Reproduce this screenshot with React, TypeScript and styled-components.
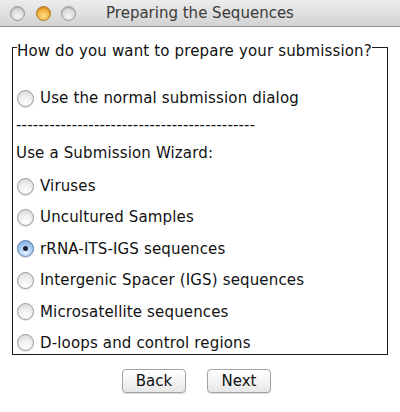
import React from "react";
import styled, { createGlobalStyle } from "styled-components";

const Global = createGlobalStyle`
  html, body { margin: 0; padding: 0; background: #ffffff; }
  body { font-family: "DejaVu Sans", "Liberation Sans", sans-serif; color: #111; }
`;

const Window = styled.div`
  width: 400px;
  height: 412px;
  display: flex;
  flex-direction: column;
  background: #ffffff;
  overflow: hidden;
`;

const TitleBar = styled.div`
  height: 26px;
  border-bottom: 1px solid #8e8e8e;
  background: linear-gradient(#ececec, #d3d3d3);
  display: grid;
  grid-template-columns: 1fr auto 1fr;
  align-items: center;
`;

const Lights = styled.div`
  display: flex;
  gap: 10.5px;
  padding-left: 10px;
`;

const Light = styled.div<{ $active?: boolean }>`
  width: 13px;
  height: 13px;
  border-radius: 50%;
  border: 0.5px solid ${(p) => (p.$active ? "#b0741c" : "#9a9a9a")};
  background: ${(p) =>
    p.$active
      ? "radial-gradient(circle at 50% 70%, #ffe08a 0%, #f3b23e 55%, #d98e1e 100%)"
      : "radial-gradient(circle at 50% 70%, #f4f4f4 0%, #dcdcdc 55%, #b8b8b8 100%)"};
  box-shadow: inset 0 1px 1px rgba(0,0,0,0.15);
`;

const Title = styled.div`
  font-size: 15px;
  color: #3b3b3b;
  white-space: nowrap;
`;

const Content = styled.div`
  padding: 20px 12px 0 12px;
  display: flex;
  flex-direction: column;
`;

const Panel = styled.div`
  border: 1px solid #1a1a1a;
  border-top: none;
  display: flex;
  flex-direction: column;
  padding-bottom: 1px;
`;

const Header = styled.div`
  height: 20px;
  display: flex;
  align-items: flex-start;
`;

const Tick = styled.div<{ $grow?: boolean }>`
  border-top: 1px solid #1a1a1a;
  width: 4px;
  flex: ${(p) => (p.$grow ? "1" : "none")};
`;

const Legend = styled.div`
  font-size: 15px;
  letter-spacing: 0.15px;
  line-height: 16px;
  margin-top: -4px;
  white-space: nowrap;
`;

const Row = styled.div<{ $top: number }>`
  height: 20px;
  margin-top: ${(p) => p.$top}px;
  display: flex;
  align-items: center;
  gap: 6px;
  padding-left: 4px;
  font-size: 15px;
  letter-spacing: 0.15px;
  white-space: nowrap;
`;

const Label = styled.div<{ $top: number }>`
  height: 20px;
  margin-top: ${(p) => p.$top}px;
  display: flex;
  align-items: center;
  padding-left: 3px;
  font-size: 15px;
  letter-spacing: 0.15px;
  white-space: nowrap;
`;

const Radio = styled.div<{ $checked?: boolean }>`
  width: 15px;
  height: 15px;
  border-radius: 50%;
  flex: none;
  display: flex;
  align-items: center;
  justify-content: center;
  border: 1px solid ${(p) => (p.$checked ? "#5b7fae" : "#9a9a9a")};
  background: ${(p) =>
    p.$checked
      ? "radial-gradient(circle at 50% 75%, #e6f2ff 0%, #a9cdf3 50%, #6f9fd4 100%)"
      : "radial-gradient(circle at 50% 80%, #ffffff 0%, #f0f0f0 45%, #d2d2d2 100%)"};
  box-shadow: 0 1px 1px rgba(0,0,0,0.12);
`;

const Dot = styled.div`
  width: 5px;
  height: 5px;
  border-radius: 50%;
  background: #17253a;
`;

const Wizard = styled.div`
  display: flex;
  flex-direction: column;
  gap: 11.4px;
  margin-top: 13px;
`;

const Buttons = styled.div`
  display: flex;
  justify-content: center;
  gap: 21px;
  margin-top: 14px;
  padding-right: 7px;
`;

const Button = styled.button`
  width: 64px;
  height: 24px;
  border-radius: 4px;
  border: 1px solid #a3a3a3;
  background: linear-gradient(#ffffff, #f1f1f1 60%, #e6e6e6);
  box-shadow: 0 1px 1px rgba(0,0,0,0.15);
  font-family: "DejaVu Sans", sans-serif;
  font-size: 15px;
  color: #111;
  padding: 0;
`;

const options = [
  "Viruses",
  "Uncultured Samples",
  "rRNA-ITS-IGS sequences",
  "Intergenic Spacer (IGS) sequences",
  "Microsatellite sequences",
  "D-loops and control regions",
];

export default function App() {
  return (
    <Window>
      <Global />
      <TitleBar>
        <Lights>
          <Light />
          <Light $active />
          <Light />
        </Lights>
        <Title>Preparing the Sequences</Title>
        <div />
      </TitleBar>
      <Content>
        <Panel>
          <Header>
            <Tick />
            <Legend>How do you want to prepare your submission?</Legend>
            <Tick $grow />
          </Header>
          <Row $top={21}>
            <Radio />
            Use the normal submission dialog
          </Row>
          <Label $top={7}>{"-".repeat(43)}</Label>
          <Label $top={8}>Use a Submission Wizard:</Label>
          <Wizard>
            {options.map((o) => (
              <Row $top={0} key={o}>
                <Radio $checked={o === "rRNA-ITS-IGS sequences"}>
                  {o === "rRNA-ITS-IGS sequences" && <Dot />}
                </Radio>
                {o}
              </Row>
            ))}
          </Wizard>
        </Panel>
        <Buttons>
          <Button>Back</Button>
          <Button>Next</Button>
        </Buttons>
      </Content>
    </Window>
  );
}
